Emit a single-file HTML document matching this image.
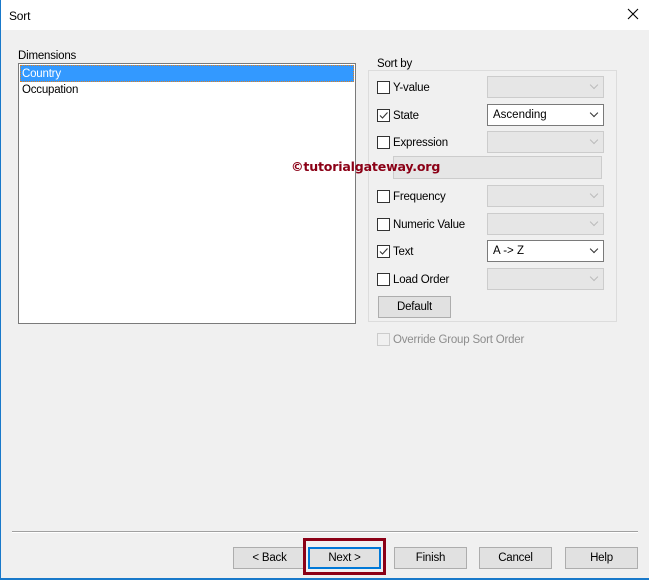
<!DOCTYPE html>
<html><head><style>
*{margin:0;padding:0;box-sizing:border-box}
body{width:649px;height:580px;overflow:hidden;background:#f0f0f0;font-family:"Liberation Sans",sans-serif;font-size:11.5px;color:#000;position:relative}
.a{position:absolute}
.cb{position:absolute;width:13px;height:13px;border:1px solid #333;background:#fff}
.lbl{position:absolute;white-space:nowrap;letter-spacing:-0.2px}
.cmb{position:absolute;left:487px;width:117px;height:22px;border:1px solid #ccc;background:#e6e6e6}
.cmb:after{content:"";position:absolute;right:6px;top:5px;width:5px;height:5px;border-right:1px solid #bbb;border-bottom:1px solid #bbb;transform:rotate(45deg)}
.cmb.on{background:#fff;border-color:#7a7a7a}
.cmb.on:after{border-color:#333}
.cmb span{position:absolute;left:5px;top:4px}
.btn{position:absolute;height:22px;border:1px solid #adadad;background:#e1e1e1;text-align:center;line-height:21px;letter-spacing:-0.2px}
.cb svg{position:absolute;left:0;top:0}
</style></head><body>
<div class="a" style="left:0;top:0;width:649px;height:30px;background:#fff"></div>
<div class="lbl" style="left:9px;top:9px;font-size:12px">Sort</div>
<svg class="a" style="left:627px;top:8px" width="12" height="12"><path d="M1 1L11 11M11 1L1 11" stroke="#000" stroke-width="1.1"/></svg>
<div class="a" style="left:0;top:0;width:1px;height:580px;background:#1979ca"></div>
<div class="a" style="left:0;top:578px;width:649px;height:2px;background:#1979ca"></div>

<div class="lbl" style="left:18px;top:50px">Dimensions</div>
<div class="a" style="left:18px;top:63px;width:338px;height:261px;background:#fff;border:1px solid #7a7a7a"></div>
<div class="a" style="left:20px;top:65px;width:334px;height:17px;background:#3399ff;border:1px dotted #e08020"></div>
<div class="lbl" style="left:22px;top:68px;color:#fff">Country</div>
<div class="lbl" style="left:22px;top:84px">Occupation</div>

<div class="a" style="left:368px;top:70px;width:249px;height:252px;border:1px solid #dcdcdc"></div>
<div class="lbl" style="left:375px;top:58px;background:#f0f0f0;padding:0 2px">Sort by</div>

<div class="cb" style="left:377px;top:81px"></div><div class="lbl" style="left:393px;top:82px">Y-value</div>
<div class="cmb" style="top:76px"></div>
<div class="cb" style="left:377px;top:109px"><svg width="11" height="11"><path d="M2 5.5L4.5 8L9.5 2.5" stroke="#333" fill="none" stroke-width="1.1"/></svg></div><div class="lbl" style="left:393px;top:110px">State</div>
<div class="cmb on" style="top:104px"><span>Ascending</span></div>
<div class="cb" style="left:377px;top:136px"></div><div class="lbl" style="left:393px;top:137px">Expression</div>
<div class="cmb" style="top:131px"></div>
<div class="a" style="left:393px;top:156px;width:209px;height:23px;border:1px solid #ccc;background:#e6e6e6"></div>
<div class="cb" style="left:377px;top:190px"></div><div class="lbl" style="left:393px;top:191px">Frequency</div>
<div class="cmb" style="top:185px"></div>
<div class="cb" style="left:377px;top:218px"></div><div class="lbl" style="left:393px;top:219px">Numeric Value</div>
<div class="cmb" style="top:213px"></div>
<div class="cb" style="left:377px;top:245px"><svg width="11" height="11"><path d="M2 5.5L4.5 8L9.5 2.5" stroke="#333" fill="none" stroke-width="1.1"/></svg></div><div class="lbl" style="left:393px;top:246px">Text</div>
<div class="cmb on" style="top:240px"><span>A -&gt; Z</span></div>
<div class="cb" style="left:377px;top:273px"></div><div class="lbl" style="left:393px;top:274px">Load Order</div>
<div class="cmb" style="top:268px"></div>
<div class="btn" style="left:378px;top:296px;width:73px">Default</div>
<div class="cb" style="left:377px;top:333px;border-color:#ccc;background:#f0f0f0"></div><div class="lbl" style="left:393px;top:334px;color:#8d8d8d">Override Group Sort Order</div>

<div class="lbl" style="left:291px;top:159px;font-weight:bold;font-size:12.6px;color:#8b0016;font-family:'DejaVu Sans',sans-serif;letter-spacing:-0.2px">©tutorialgateway.org</div>

<div class="a" style="left:12px;top:531px;width:626px;height:1px;background:#a0a0a0"></div>
<div class="a" style="left:12px;top:532px;width:626px;height:1px;background:#fff"></div>
<div class="btn" style="left:233px;top:547px;width:73px">&lt; Back</div>
<div class="a" style="left:303px;top:538px;width:83px;height:37px;border:3px solid #8b0016"></div>
<div class="btn" style="left:308px;top:547px;width:73px;border:2px solid #0078d7;line-height:19px">Next &gt;</div>
<div class="btn" style="left:394px;top:547px;width:73px">Finish</div>
<div class="btn" style="left:479px;top:547px;width:73px">Cancel</div>
<div class="btn" style="left:565px;top:547px;width:73px">Help</div>
</body></html>
